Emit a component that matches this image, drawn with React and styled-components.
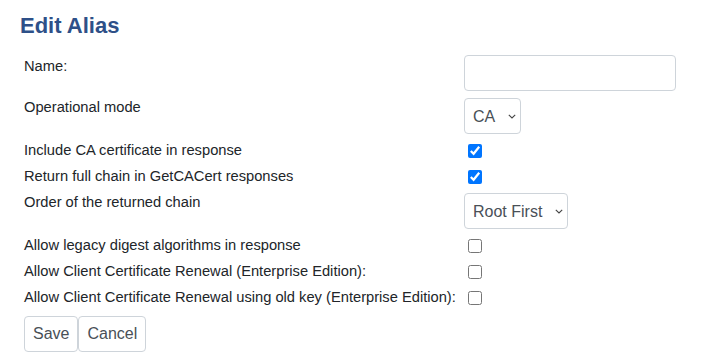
import React from "react";
import styled, { createGlobalStyle } from "styled-components";

const GlobalStyle = createGlobalStyle`
  body {
    margin: 0;
    background: #fff;
    font-family: "Liberation Sans", Arial, sans-serif;
    font-size: 14.7px;
    color: #212529;
  }
`;

const Page = styled.div`
  padding: 12px 20px;
`;

const Title = styled.h1`
  margin: 0 0 12px 0;
  font-size: 22px;
  font-weight: bold;
  color: #2e5088;
  line-height: 28px;
`;

const Form = styled.div`
  display: grid;
  grid-template-columns: 440px auto;
  padding-left: 4px;
`;

const Label = styled.div`
  padding: ${(p) => (p.$low ? "6px 0 1px" : "4px 0 3px")};
  line-height: 17px;
`;

const Cell = styled.div`
  padding: 3px 0 4px;
  display: flex;
  align-items: flex-start;
`;

const TextInput = styled.input`
  width: 212px;
  height: 36px;
  box-sizing: border-box;
  border: 1px solid #ced4da;
  border-radius: 4px;
  font: inherit;
  padding: 6px 12px;
`;

const SelectWrap = styled.div`
  position: relative;
  display: inline-block;
`;

const Select = styled.select`
  appearance: none;
  width: ${(p) => p.$w}px;
  height: 36px;
  box-sizing: border-box;
  border: 1px solid #ced4da;
  border-radius: 4px;
  background: #fff;
  font-family: inherit;
  font-size: 16px;
  color: #495057;
  padding: 0 20px 0 8px;
  display: block;
`;

const Chevron = styled.svg`
  position: absolute;
  right: 5px;
  top: 16px;
  pointer-events: none;
`;

const Check = styled.input.attrs({ type: "checkbox" })`
  margin: 3px 0 2px 4px;
  width: 14px;
  height: 14px;
  display: block;
`;

const Buttons = styled.div`
  display: flex;
  padding: 5px 0 0 4px;
`;

const Button = styled.button`
  height: 36px;
  padding: 0 8px;
  background: #fff;
  border: 1px solid #ced4da;
  border-radius: 4px;
  font-family: inherit;
  font-size: 16px;
  color: #495057;
`;

const Dropdown = ({ w, value, options }) => (
  <SelectWrap>
    <Select $w={w} defaultValue={value}>
      {options.map((o) => (
        <option key={o}>{o}</option>
      ))}
    </Select>
    <Chevron width="8" height="5" viewBox="0 0 8 5">
      <path d="M0.8 0.8L4 4L7.2 0.8" fill="none" stroke="#444" strokeWidth="1.1" />
    </Chevron>
  </SelectWrap>
);

const checks = [
  ["Include CA certificate in response", true],
  ["Return full chain in GetCACert responses", true],
];

const checks2 = [
  ["Allow legacy digest algorithms in response", false],
  ["Allow Client Certificate Renewal (Enterprise Edition):", false],
  ["Allow Client Certificate Renewal using old key (Enterprise Edition):", false],
];

export default function App() {
  return (
    <Page>
      <GlobalStyle />
      <Title>Edit Alias</Title>
      <Form>
        <Label $low>Name:</Label>
        <Cell>
          <TextInput />
        </Cell>
        <Label>Operational mode</Label>
        <Cell>
          <Dropdown w={57} value="CA" options={["CA", "RA"]} />
        </Cell>
        {checks.map(([text, on]) => (
          <React.Fragment key={text}>
            <Label>{text}</Label>
            <Cell>
              <Check defaultChecked={on} />
            </Cell>
          </React.Fragment>
        ))}
        <Label>Order of the returned chain</Label>
        <Cell>
          <Dropdown w={104} value="Root First" options={["Root First", "Root Last"]} />
        </Cell>
        {checks2.map(([text, on]) => (
          <React.Fragment key={text}>
            <Label>{text}</Label>
            <Cell>
              <Check defaultChecked={on} />
            </Cell>
          </React.Fragment>
        ))}
      </Form>
      <Buttons>
        <Button>Save</Button>
        <Button>Cancel</Button>
      </Buttons>
    </Page>
  );
}
